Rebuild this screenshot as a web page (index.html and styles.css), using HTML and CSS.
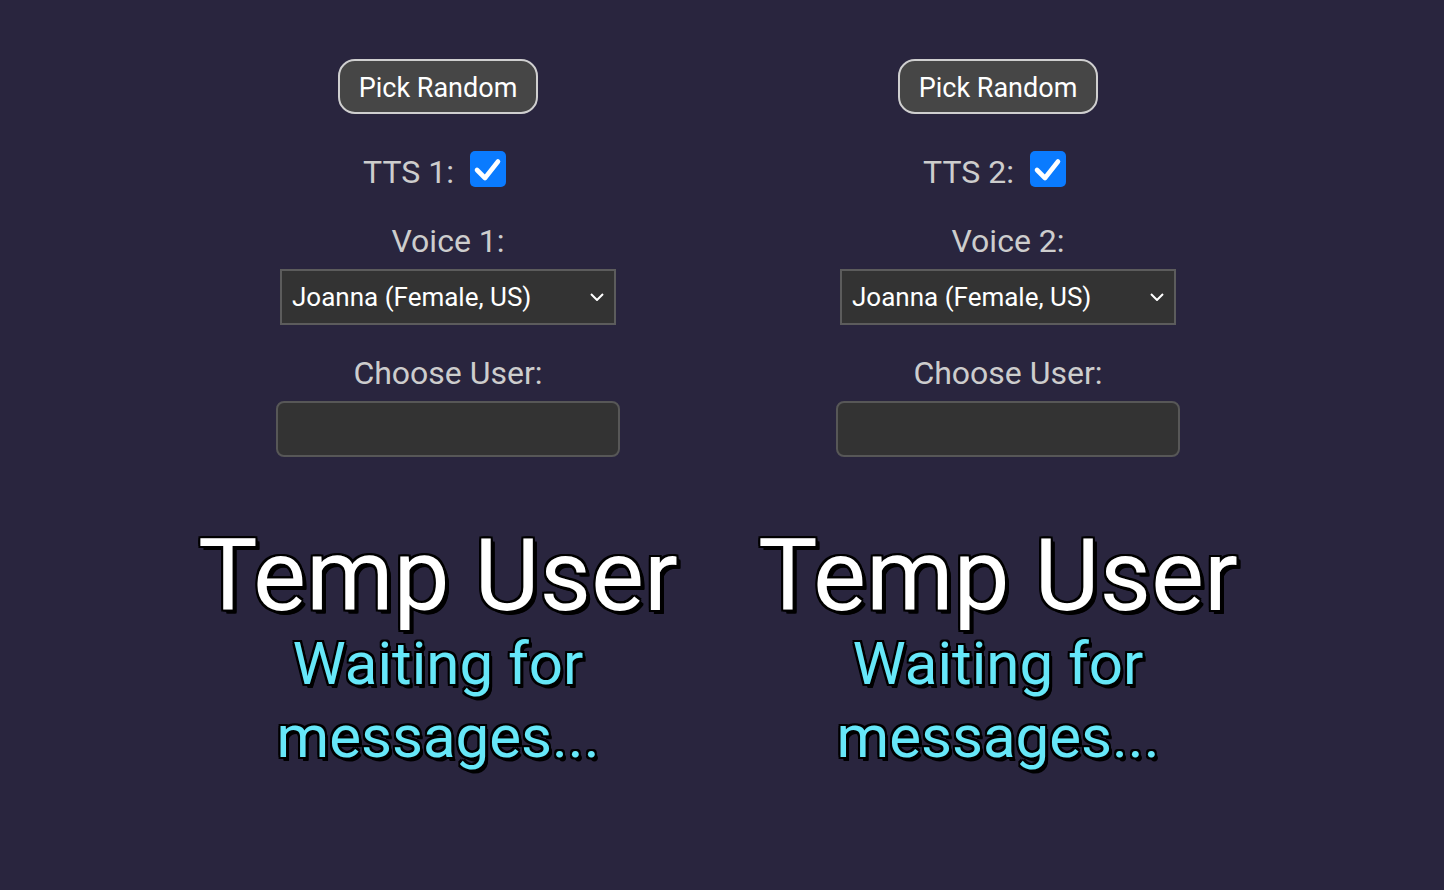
FILE: index.html
```html
<!DOCTYPE html>
<html lang="en">
<head>
<meta charset="utf-8">
<title>TTS Users</title>
<link rel="stylesheet" href="styles.css">
</head>
<body>
<main class="board">
  <section class="panel">
    <button class="pick" type="button">Pick Random</button>
    <label class="tts">
      <span>TTS 1:</span>
      <svg class="check" width="36" height="36" viewBox="0 0 36 36" aria-hidden="true">
        <rect x="0" y="0" width="36" height="36" rx="5" fill="#0a7bff"/>
        <path d="M7 19 L15 27 L28 10.5" fill="none" stroke="#fff" stroke-width="4.6" stroke-linecap="round" stroke-linejoin="round"/>
      </svg>
    </label>
    <div class="fields">
      <div class="label">Voice 1:</div>
      <div class="select-wrap">
        <select class="voice"><option>Joanna (Female, US)</option></select>
        <svg class="chev" width="14" height="8" viewBox="0 0 14 8" aria-hidden="true"><path d="M1 1 L7 7 L13 1" fill="none" stroke="#fff" stroke-width="2"/></svg>
      </div>
      <div class="label user-label">Choose User:</div>
      <input class="user" type="text">
    </div>
    <div class="name">Temp User</div>
    <div class="msg">Waiting for messages...</div>
  </section>
  <section class="panel">
    <button class="pick" type="button">Pick Random</button>
    <label class="tts">
      <span>TTS 2:</span>
      <svg class="check" width="36" height="36" viewBox="0 0 36 36" aria-hidden="true">
        <rect x="0" y="0" width="36" height="36" rx="5" fill="#0a7bff"/>
        <path d="M7 19 L15 27 L28 10.5" fill="none" stroke="#fff" stroke-width="4.6" stroke-linecap="round" stroke-linejoin="round"/>
      </svg>
    </label>
    <div class="fields">
      <div class="label">Voice 2:</div>
      <div class="select-wrap">
        <select class="voice"><option>Joanna (Female, US)</option></select>
        <svg class="chev" width="14" height="8" viewBox="0 0 14 8" aria-hidden="true"><path d="M1 1 L7 7 L13 1" fill="none" stroke="#fff" stroke-width="2"/></svg>
      </div>
      <div class="label user-label">Choose User:</div>
      <input class="user" type="text">
    </div>
    <div class="name">Temp User</div>
    <div class="msg">Waiting for messages...</div>
  </section>
</main>
</body>
</html>
```

FILE: styles.css
```css
html, body {
  margin: 0;
  padding: 0;
  background: #29253e;
  height: 100%;
}
body {
  font-family: Roboto, "Noto Sans", "Liberation Sans", sans-serif;
  color: #fff;
}
.board {
  display: grid;
  grid-template-columns: 560px 560px;
  padding-left: 158px;
  padding-top: 59px;
}
.panel {
  display: flex;
  flex-direction: column;
  align-items: center;
  text-align: center;
}
.pick {
  box-sizing: border-box;
  height: 55px;
  padding: 3px 19px 0;
  background: #464646;
  color: #fff;
  border: 2px solid #cfcfcf;
  border-radius: 17px;
  font-family: inherit;
  font-size: 27px;
  line-height: 1;
  margin: 0;
}
.tts {
  display: flex;
  align-items: center;
  gap: 16px;
  height: 36px;
  margin-top: 37px;
  margin-right: 7px;
  font-size: 32px;
  color: #cdcdcd;
}
.tts span {
  line-height: 1;
  padding-top: 5px;
}
.check {
  display: block;
}
.fields {
  display: flex;
  flex-direction: column;
  align-items: center;
  margin-left: 20px;
  margin-top: 36px;
}
.label {
  font-size: 32px;
  color: #cdcdcd;
  line-height: 37.5px;
}
.select-wrap {
  position: relative;
  margin-top: 8px;
}
.voice {
  display: block;
  box-sizing: border-box;
  width: 336px;
  height: 56px;
  -webkit-appearance: none;
  appearance: none;
  background: #333;
  color: #fff;
  border: 2px solid #5c5c5c;
  border-radius: 0;
  font-family: inherit;
  font-size: 26px;
  padding: 0 40px 0 10px;
  margin: 0;
}
.chev {
  position: absolute;
  right: 12px;
  top: 24px;
  pointer-events: none;
}
.user-label {
  margin-top: 30px;
}
.user {
  display: block;
  box-sizing: border-box;
  width: 344px;
  height: 56px;
  margin-top: 9px;
  background: #333;
  border: 2px solid #575757;
  border-radius: 8px;
  color: #fff;
  font-family: inherit;
  font-size: 26px;
  padding: 0 10px;
}
.name {
  margin-top: 69px;
  font-size: 100px;
  line-height: 100px;
  color: #fff;
  text-shadow: -2px -2px 0 #000, 2px -2px 0 #000, -2px 2px 0 #000, 2px 2px 0 #000, 0 -2px 0 #000, 0 2px 0 #000, -2px 0 0 #000, 2px 0 0 #000, 4px 4px 0 #000, 3px 4px 0 #000, 4px 3px 0 #000;
}
.msg {
  width: 500px;
  margin-top: 1px;
  font-size: 60px;
  line-height: 73px;
  color: #66e7f8;
  text-shadow: -2px -2px 0 #000, 2px -2px 0 #000, -2px 2px 0 #000, 2px 2px 0 #000, 0 -2px 0 #000, 0 2px 0 #000, -2px 0 0 #000, 2px 0 0 #000, 3px 3px 0 #000, 3px 4px 0 #000;
}
```
